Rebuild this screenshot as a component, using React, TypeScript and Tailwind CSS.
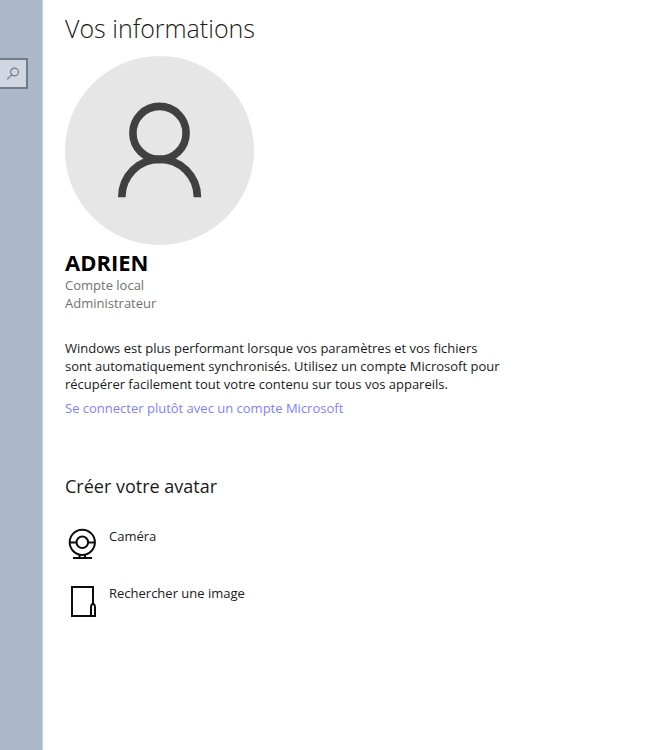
import { ReactNode } from "react";

const ACTIONS = [
  { id: "camera", label: "Caméra", icon: <CameraIcon /> },
  { id: "browse", label: "Rechercher une image", icon: <FileIcon /> },
];

function SearchIcon() {
  return (
    <svg viewBox="0 0 14 14" className="w-3.5 h-3.5" fill="none" stroke="#747b86" strokeWidth="1.2">
      <circle cx="8.5" cy="5" r="3.9" />
      <path d="M5.7 7.8 1.2 12.3" />
    </svg>
  );
}

function PersonIcon() {
  return (
    <svg viewBox="0 0 189 189" className="w-full h-full" fill="none" stroke="#404040" strokeWidth="7.6">
      <circle cx="94.5" cy="77" r="26.6" />
      <path d="M56.8 141.2a37.7 38 0 0 1 75.6 0" />
    </svg>
  );
}

function CameraIcon() {
  return (
    <svg viewBox="0 0 32 34" className="w-8 h-[34px]" fill="none" stroke="#0c0c0c" strokeWidth="2">
      <circle cx="17.3" cy="15.3" r="12.6" />
      <circle cx="17.3" cy="15.3" r="5.8" />
      <path d="M4.500 15.500h7M23 15.500h7M14.500 27.500V31M20 27.500V31M8 31h19" />
    </svg>
  );
}

function FileIcon() {
  return (
    <svg viewBox="0 0 32 34" className="w-8 h-[34px]" fill="none" stroke="#0c0c0c" strokeWidth="2">
      <path d="M28 20V3H7v29h23v-9c0-2-1-3-2-3.500c-1 .5-2 1.500-2 3.500v9" />
    </svg>
  );
}

function Action({ icon, label }: { icon: ReactNode; label: string }) {
  return (
    <button type="button" className="flex items-start text-left">
      {icon}
      <span className="ml-3">{label}</span>
    </button>
  );
}

export default function App() {
  return (
    <div className="flex min-h-screen bg-white text-[13px] leading-[18px] text-[#1a1a1a] font-['Open_Sans','Noto_Sans',sans-serif]">
      <aside className="w-[43px] shrink-0 bg-[#abb9cb] border-r border-[#c5d1df] pt-[58px]">
        <form role="search" onSubmit={(e) => e.preventDefault()} className="flex h-[31px] w-7 items-center border-2 border-l-0 border-[#727c89] bg-[#d0d7e2]">
          <input type="search" aria-label="Rechercher" className="min-w-0 flex-1 bg-transparent outline-none" />
          <button type="submit" aria-label="Lancer la recherche" className="mr-1.5 shrink-0">
            <SearchIcon />
          </button>
        </form>
      </aside>

      <main className="flex-1 min-w-0 pl-[22px] pr-6 pt-2.5">
        <h1 className="text-[25px] leading-9 font-light">Vos informations</h1>

        <section className="mt-2.5">
          <div className="w-[189px] h-[189px] rounded-full bg-[#e6e6e6]">
            <PersonIcon />
          </div>
          <h2 className="mt-[3px] text-[22px] leading-7 font-bold text-black">ADRIEN</h2>
          <p className="text-[#717171]">Compte local</p>
          <p className="text-[#717171]">Administrateur</p>
        </section>

        <section className="mt-[27px] max-w-[480px]">
          <p>
            Windows est plus performant lorsque vos paramètres et vos fichiers
            <br />
            sont automatiquement synchronisés. Utilisez un compte Microsoft pour
            <br />
            récupérer facilement tout votre contenu sur tous vos appareils.
          </p>
          <a href="#connexion" className="mt-1.5 block text-[#7f7fff]">Se connecter plutôt avec un compte Microsoft</a>
        </section>

        <section className="mt-[55px]">
          <h2 className="text-[18px] leading-7">Créer votre avatar</h2>
          <div className="mt-[27px] flex flex-col items-start gap-[23px]">
            {ACTIONS.map((a) => (
              <Action key={a.id} icon={a.icon} label={a.label} />
            ))}
          </div>
        </section>
      </main>
    </div>
  );
}
